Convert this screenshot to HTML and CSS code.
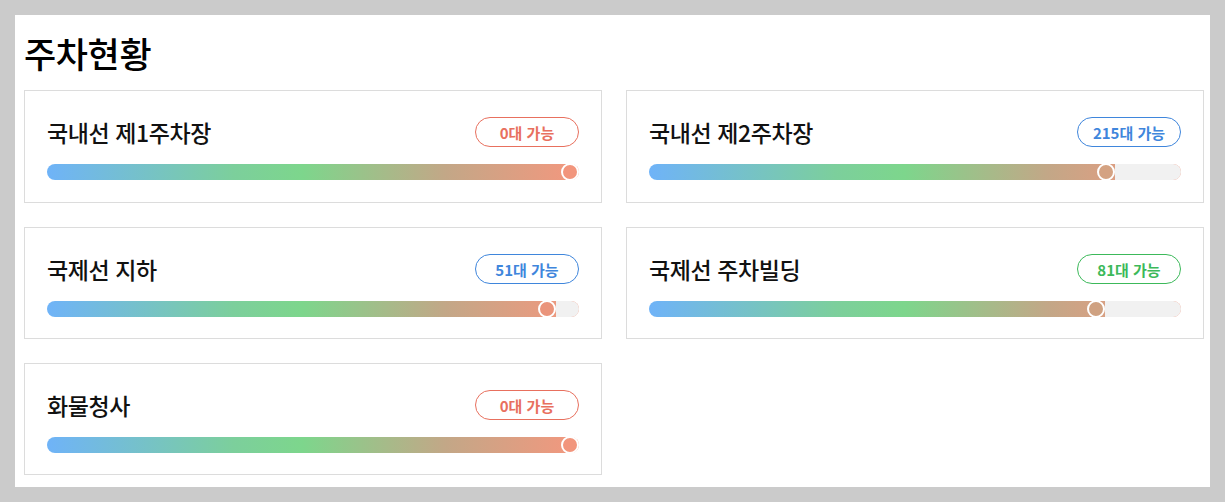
FILE: index.html
```html
<!DOCTYPE html>
<html lang="ko">
<head>
<meta charset="utf-8">
<title>주차현황</title>
<link rel="stylesheet" href="styles.css">
</head>
<body>
<main class="panel">
  <h1 class="title">주차현황</h1>
  <div class="grid">
    <section class="card">
      <div class="head">
        <h2 class="name">국내선 제1주차장</h2>
        <span class="badge red">0대 가능</span>
      </div>
      <div class="track">
        <div class="fill" style="width:100%"></div>
        <div class="rest"></div>
        <span class="knob" style="left:100%;background:#f2957c"></span>
      </div>
    </section>
    <section class="card">
      <div class="head">
        <h2 class="name">국내선 제2주차장</h2>
        <span class="badge blue">215대 가능</span>
      </div>
      <div class="track">
        <div class="fill" style="width:87.6%"></div>
        <div class="rest"></div>
        <span class="knob" style="left:87.6%;background:#d4a282"></span>
      </div>
    </section>
    <section class="card">
      <div class="head">
        <h2 class="name">국제선 지하</h2>
        <span class="badge blue">51대 가능</span>
      </div>
      <div class="track">
        <div class="fill" style="width:95.7%"></div>
        <div class="rest"></div>
        <span class="knob" style="left:95.7%;background:#ea947b"></span>
      </div>
    </section>
    <section class="card">
      <div class="head">
        <h2 class="name">국제선 주차빌딩</h2>
        <span class="badge green">81대 가능</span>
      </div>
      <div class="track">
        <div class="fill" style="width:85.7%"></div>
        <div class="rest"></div>
        <span class="knob" style="left:85.7%;background:#cfa181"></span>
      </div>
    </section>
    <section class="card">
      <div class="head">
        <h2 class="name">화물청사</h2>
        <span class="badge red">0대 가능</span>
      </div>
      <div class="track">
        <div class="fill" style="width:100%"></div>
        <div class="rest"></div>
        <span class="knob" style="left:100%;background:#f2957c"></span>
      </div>
    </section>
  </div>
</main>
</body>
</html>
```
FILE: styles.css
```css
* { box-sizing: border-box; }
html, body { margin: 0; padding: 0; }
body {
  background: #cbcbcb;
  padding: 15px;
  font-family: "Noto Sans CJK KR", "Noto Sans", sans-serif;
  color: #111;
}
.panel {
  background: #fff;
  width: 1195px;
  height: 472px;
  padding: 16px 6px 13px 9px;
}
.title {
  margin: 0 0 15px 0;
  font-size: 35px;
  line-height: 44px;
  font-weight: 500;
  letter-spacing: -0.4px;
  color: #000;
}
.grid {
  display: grid;
  grid-template-columns: 1fr 1fr;
  column-gap: 24px;
  row-gap: 24px;
}
.card {
  border: 1px solid #dcdcdc;
  height: 112px;
  padding: 26px 22px 0 22px;
}
.card:nth-child(-n+2) { height: 113px; }
.head {
  display: flex;
  justify-content: space-between;
  align-items: center;
  height: 30px;
  margin-bottom: 17px;
}
.name {
  margin: 0;
  font-size: 23px;
  font-weight: 500;
  letter-spacing: -0.4px;
  color: #111;
}
.badge {
  width: 104px;
  height: 30px;
  border: 1px solid;
  border-radius: 15px;
  display: flex;
  align-items: center;
  justify-content: center;
  font-size: 15px;
  font-weight: 700;
}
.badge.red { color: #e8705e; border-color: #e8705e; }
.badge.blue { color: #3f86dc; border-color: #3f86dc; }
.badge.green { color: #3cb95a; border-color: #3cb95a; }
.track {
  position: relative;
  display: flex;
  height: 16px;
  border-radius: 8px;
  background: linear-gradient(90deg, #6fb3f8 0%, #7ccf9c 35%, #7dd68c 48%, #c3a787 75%, #f4977e 100%);
}
.fill { height: 100%; }
.rest {
  flex: 1;
  background: #f1f1f1;
  border-radius: 0 8px 8px 0;
}
.knob {
  position: absolute;
  top: -1px;
  width: 18px;
  height: 18px;
  margin-left: -18px;
  border-radius: 50%;
  border: 2.5px solid #fff;
}
```
